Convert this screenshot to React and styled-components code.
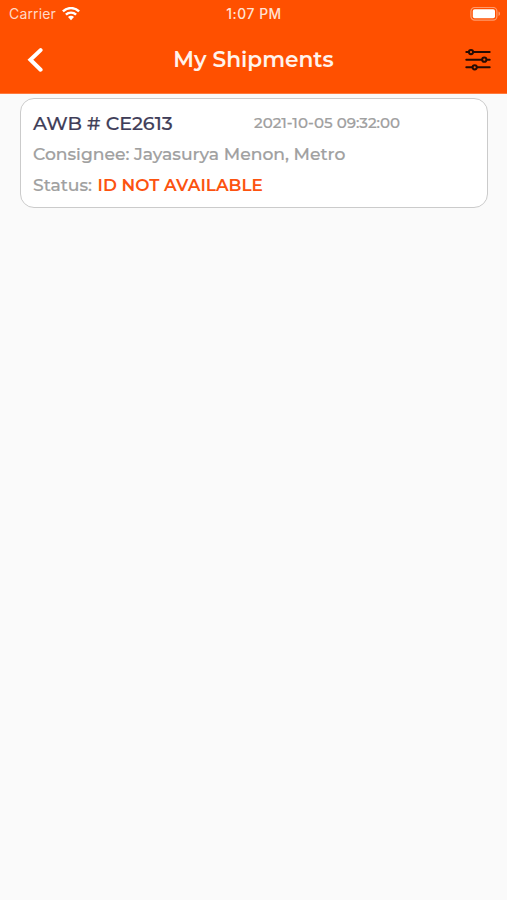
import React from "react";
import styled, { createGlobalStyle } from "styled-components";

const GlobalStyle = createGlobalStyle`
  *, *::before, *::after { box-sizing: border-box; }
  body {
    margin: 0;
    background: #fafafa;
    font-family: "Montserrat", "Inter", sans-serif;
  }
`;

const Screen = styled.main`
  display: flex;
  flex-direction: column;
  min-height: 900px;
`;

const Header = styled.header`
  height: 94px;
  background: #ff5000;
  border-bottom: 1px solid #ff7a3d;
  color: #fff3ec;
`;

const StatusBar = styled.div`
  display: grid;
  grid-template-columns: 1fr auto 1fr;
  align-items: center;
  height: 27px;
  padding: 0 8px 0 9px;
`;

const Carrier = styled.div`
  display: flex;
  align-items: center;
  gap: 6px;
  font: 400 14px/27px "Inter", sans-serif;
  color: #ffd9c6;
`;

const CarrierName = styled.span`
  width: 47px;
  white-space: nowrap;
  letter-spacing: 0.15px;
`;

const Clock = styled.time`
  padding-top: 1px;
  font: 500 13.8px/26px "Inter", sans-serif;
  letter-spacing: 0.55px;
  color: #ffe2d3;
`;

const BatteryIcon = styled.svg`
  justify-self: end;
  margin-right: -2px;
`;

const NavBar = styled.nav`
  display: grid;
  grid-template-columns: 60px 1fr 60px;
  align-items: center;
  height: 65px;
`;

const IconButton = styled.button`
  display: flex;
  justify-content: ${(p) => p.$side};
  padding: ${(p) => (p.$side === "flex-start" ? "0 0 0 25px" : "0 16px 0 0")};
  border: 0;
  background: none;
`;

const Title = styled.h1`
  margin: -1px 0 0;
  text-align: center;
  font-size: 21.7px;
  font-weight: 600;
  line-height: 30px;
  white-space: nowrap;
`;

const ShipmentList = styled.section`
  display: flex;
  flex-direction: column;
  padding: 4px 19px 0 20px;
`;

const Card = styled.article`
  height: 110px;
  padding: 9px 12px;
  background: #fff;
  border: 1.5px solid #cbcbcb;
  border-radius: 14px;
`;

const Row = styled.div`
  display: flex;
  align-items: ${(p) => p.$align || "baseline"};
  height: ${(p) => p.$height}px;
  line-height: ${(p) => p.$height}px;
  white-space: nowrap;
`;

const Awb = styled.h2`
  width: 221px;
  margin: 0;
  font-size: 19.1px;
  line-height: 32px;
  font-weight: 500;
  -webkit-text-stroke: 0.2px #3f3d58;
  color: #3f3d58;
`;

const Timestamp = styled.time`
  font-size: 15.05px;
  line-height: 29px;
  font-weight: 500;
  -webkit-text-stroke: 0.2px #a0a0a0;
  color: #a0a0a0;
`;

const Detail = styled.span`
  font-size: 17.2px;
  font-weight: 500;
  -webkit-text-stroke: 0.2px #a0a0a0;
  color: #a0a0a0;
`;

const StatusLabel = styled(Detail)`
  width: 64.5px;
`;

const StatusValue = styled(Detail)`
  font-size: 16.9px;
  font-weight: 600;
  -webkit-text-stroke: 0;
  color: #fc5310;
`;

export default function App() {
  return (
    <Screen>
      <GlobalStyle />
      <Header>
        <StatusBar>
          <Carrier>
            <CarrierName>Carrier</CarrierName>
            <svg width="18" height="14" viewBox="0 0 18 14" fill="none" stroke="#fff" strokeWidth="2.4">
              <path d="M.9 4.4a11.5 11.5 0 0 1 16.2 0" />
              <path d="M3.9 7.7a7.2 7.2 0 0 1 10.2 0" />
              <path d="M6 10.1a4.2 4.2 0 0 1 6 0L9 13.2Z" fill="#fff" stroke="none" />
            </svg>
          </Carrier>
          <Clock>1:07 PM</Clock>
          <BatteryIcon width="31" height="14" viewBox="0 0 31 14">
            <rect x=".9" y=".5" width="26" height="12.6" rx="3.8" fill="none" stroke="#ff9a6b" strokeWidth="1.2" />
            <rect x="2.8" y="2.3" width="22.2" height="9" rx="1.8" fill="#fff" />
            <path d="M28.5 4.6c2 .6 2 3.8 0 4.4Z" fill="#ff9a6b" />
          </BatteryIcon>
        </StatusBar>
        <NavBar>
          <IconButton $side="flex-start" aria-label="Back">
            <svg width="18" height="26" viewBox="0 0 18 26" fill="none" stroke="#fff" strokeWidth="4" strokeLinecap="round">
              <path d="M15.6 3.1 5.4 12.8l10.2 9.9" />
            </svg>
          </IconButton>
          <Title>My Shipments</Title>
          <IconButton $side="flex-end" aria-label="Filter shipments">
            <svg width="26" height="24" viewBox="0 0 26 24" fill="#ff5000" stroke="#260b03" strokeWidth="2" strokeLinecap="round">
              <path d="M1.3 4.1h23.4M1.3 11.7h23.4M1.3 19.3h23.4" />
              <circle cx="6" cy="4.1" r="2.1" />
              <circle cx="19.3" cy="11.7" r="2.1" />
              <circle cx="9.7" cy="19.3" r="2.1" />
            </svg>
          </IconButton>
        </NavBar>
      </Header>
      <ShipmentList>
        <Card>
          <Row $height={30} $align="flex-start">
            <Awb>AWB # CE2613</Awb>
            <Timestamp>2021-10-05 09:32:00</Timestamp>
          </Row>
          <Row $height={31}>
            <Detail>Consignee: Jayasurya Menon, Metro</Detail>
          </Row>
          <Row $height={32}>
            <StatusLabel>Status:</StatusLabel>
            <StatusValue>ID NOT AVAILABLE</StatusValue>
          </Row>
        </Card>
      </ShipmentList>
    </Screen>
  );
}
